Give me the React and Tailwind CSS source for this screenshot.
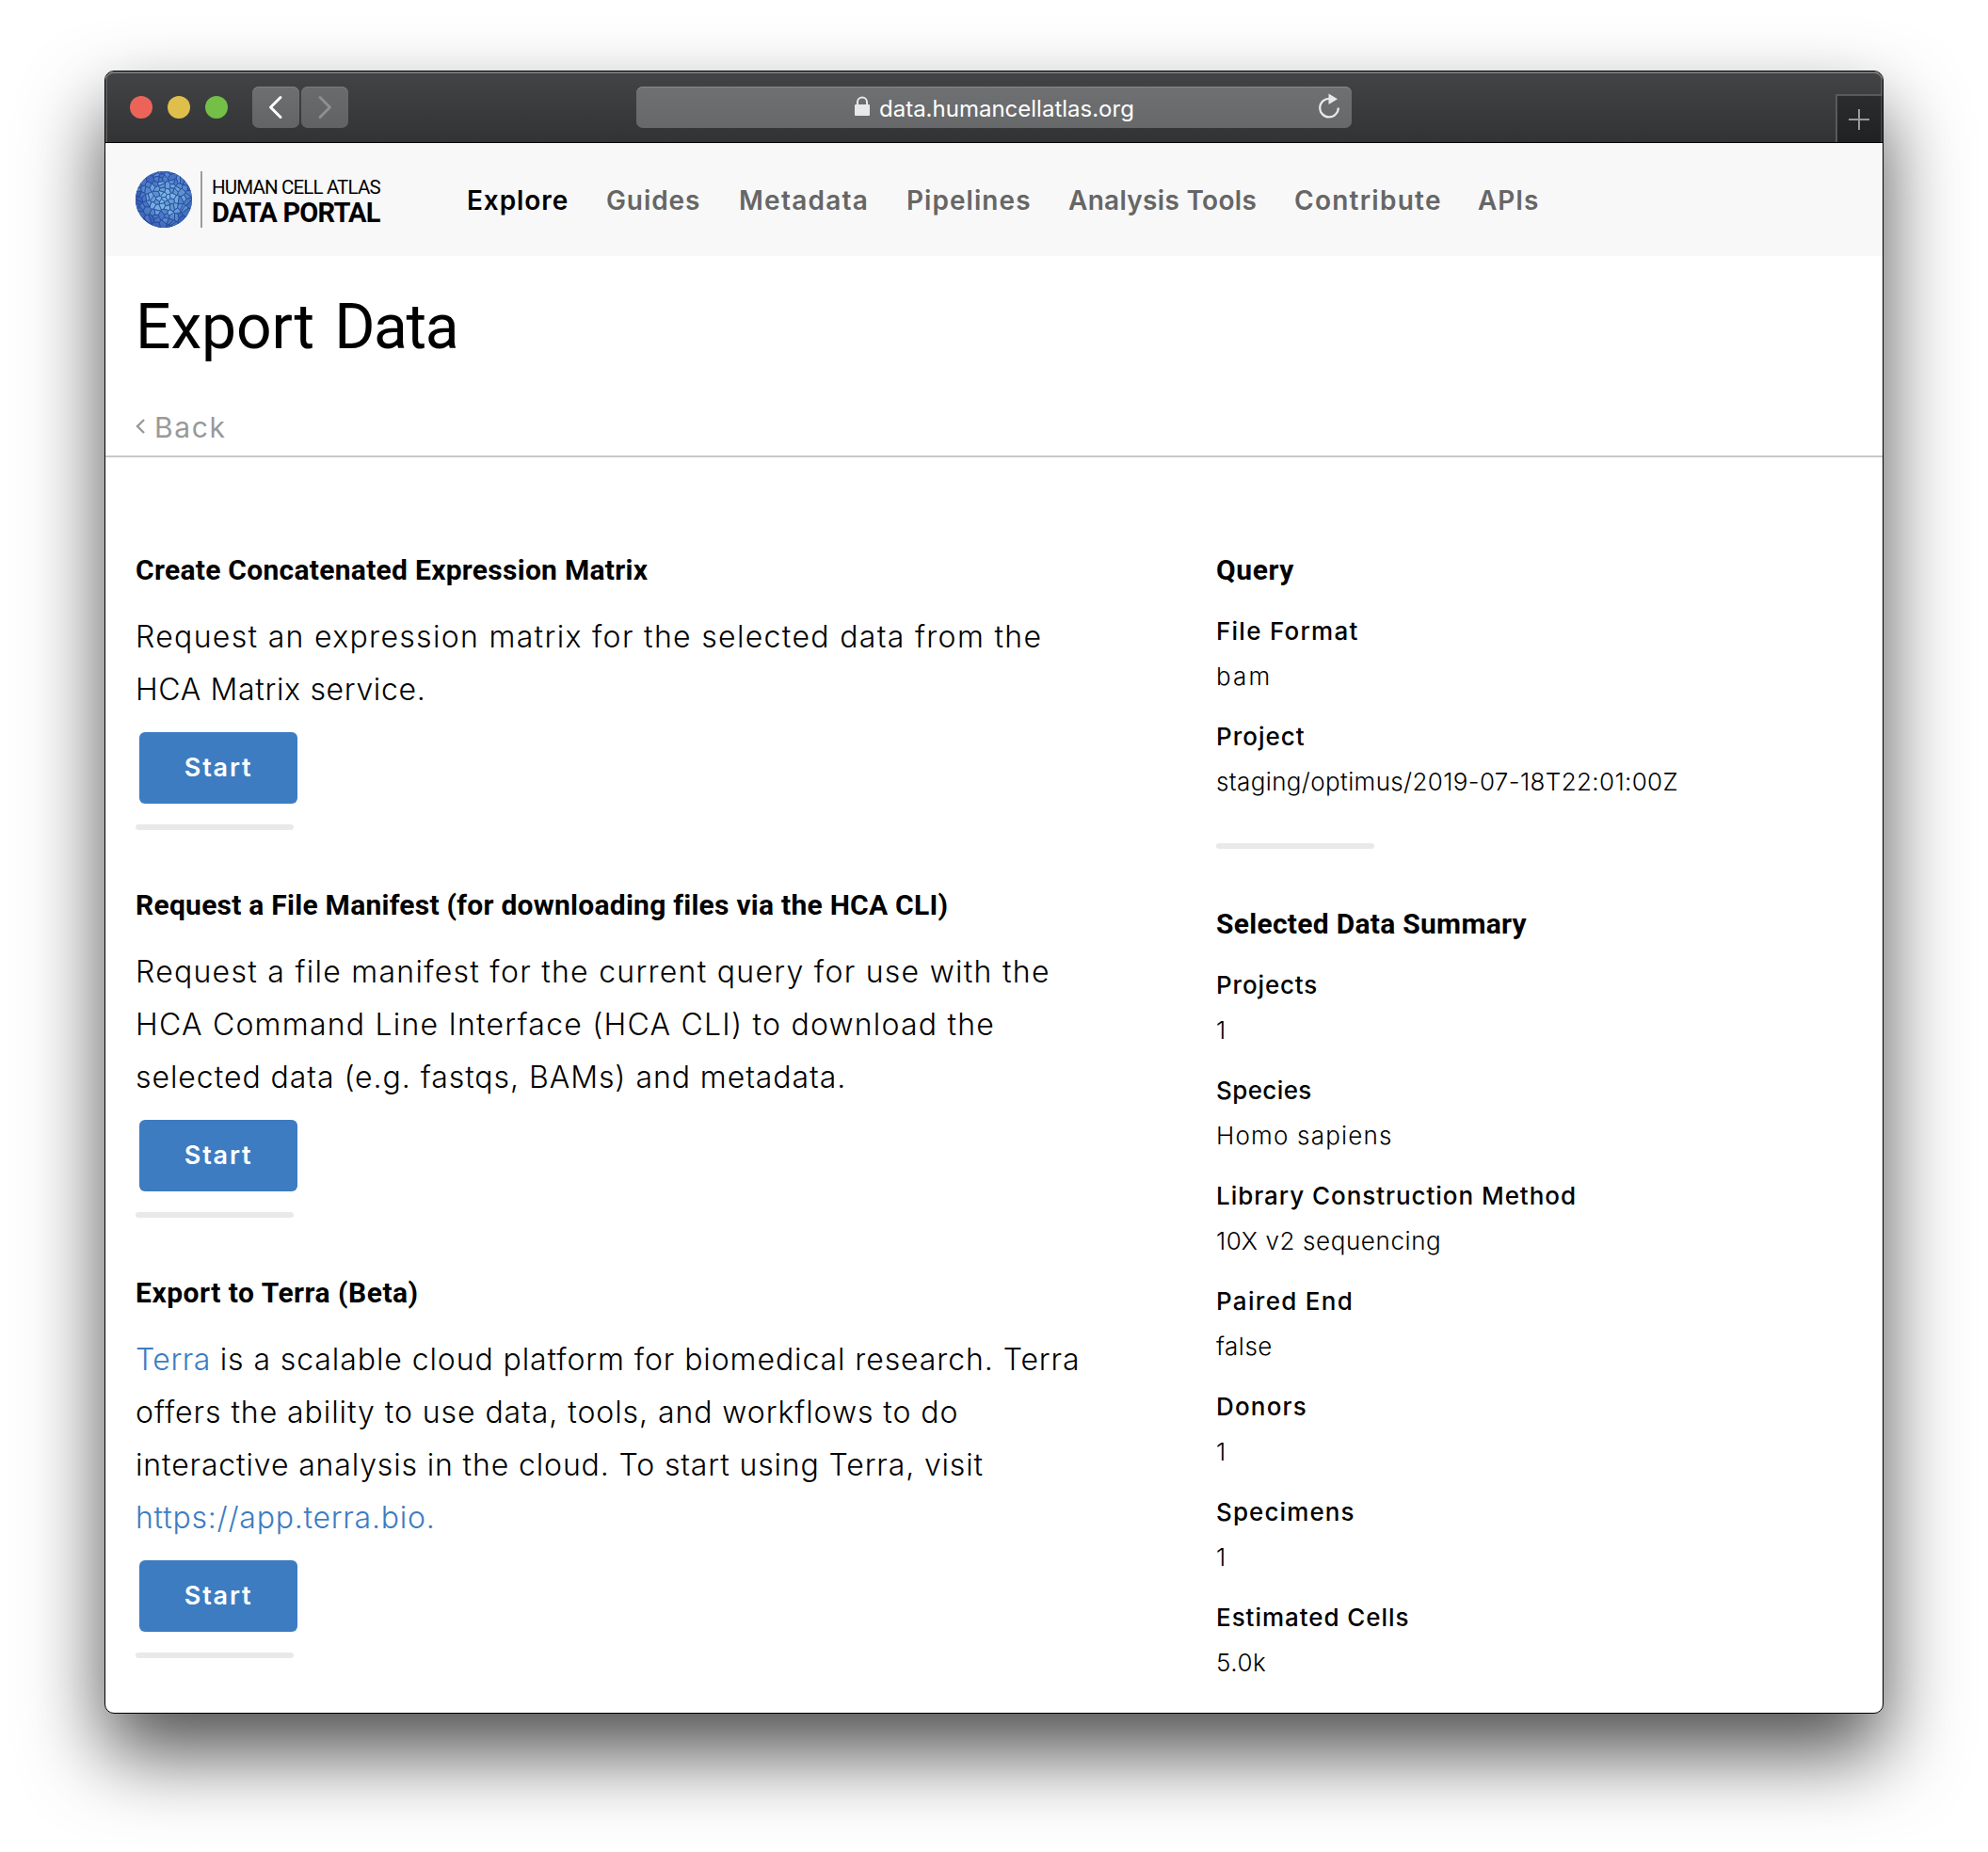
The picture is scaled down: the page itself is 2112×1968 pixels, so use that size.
import React from "react";

const NAV = [
  { label: "Explore", cls: "w-[148px] tracking-[0.9px] text-black" },
  { label: "Guides", cls: "w-[141px] tracking-[0.9px] text-[#666]" },
  { label: "Metadata", cls: "w-[178px] tracking-[1.25px] text-[#666]" },
  { label: "Pipelines", cls: "w-[172px] tracking-[1.05px] text-[#666]" },
  { label: "Analysis Tools", cls: "w-[240px] tracking-[0.3px] text-[#666]" },
  { label: "Contribute", cls: "w-[195px] tracking-[1.25px] text-[#666]" },
  { label: "APIs", cls: "tracking-[0.9px] text-[#666]" },
];

const QUERY = [
  { label: "File Format", value: "bam", lc: "tracking-[1.25px]", vc: "tracking-[2.2px]" },
  { label: "Project", value: "staging/optimus/2019-07-18T22:01:00Z", lc: "tracking-[1px]", vc: "tracking-[0.36px]" },
];

const SUMMARY = [
  { label: "Projects", value: "1", lc: "tracking-[0.85px]", vc: "" },
  { label: "Species", value: "Homo sapiens", lc: "tracking-[0.4px]", vc: "tracking-[1.2px]" },
  { label: "Library Construction Method", value: "10X v2 sequencing", lc: "tracking-[0.95px]", vc: "tracking-[0.6px]" },
  { label: "Paired End", value: "false", lc: "tracking-[1.3px]", vc: "tracking-[0.5px]" },
  { label: "Donors", value: "1", lc: "tracking-[1.2px]", vc: "" },
  { label: "Specimens", value: "1", lc: "tracking-[1.1px]", vc: "" },
  { label: "Estimated Cells", value: "5.0k", lc: "tracking-[0.95px]", vc: "tracking-[0.5px]" },
];

// Cells of the globe mark: a Voronoi tiling of points spread over a hemisphere.
function buildCells() {
  let seed = 11;
  const rnd = () => {
    seed = (seed * 16807) % 2147483647;
    return seed / 2147483647;
  };
  const pts = [];
  const n = 105;
  for (let i = 0; i < n; i++) {
    const r = 31 * Math.pow((i + 0.5) / n, 0.53) + (rnd() - 0.5) * 2.5;
    const t = i * 2.39996 + (rnd() - 0.5) * 0.45;
    pts.push([30 + r * Math.cos(t), 30 + r * Math.sin(t)]);
  }
  return pts.map(([px, py], i) => {
    let poly = [[-5, -5], [65, -5], [65, 65], [-5, 65]];
    pts.forEach(([qx, qy], j) => {
      if (i === j || poly.length === 0) return;
      const nx = qx - px;
      const ny = qy - py;
      const c = (qx * qx + qy * qy - px * px - py * py) / 2;
      const side = (p) => p[0] * nx + p[1] * ny - c;
      const out = [];
      poly.forEach((p, k) => {
        const q = poly[(k + 1) % poly.length];
        const a = side(p);
        const b = side(q);
        if (a <= 0) out.push(p);
        if (a * b < 0) {
          const s = a / (a - b);
          out.push([p[0] + s * (q[0] - p[0]), p[1] + s * (q[1] - p[1])]);
        }
      });
      poly = out;
    });
    const d = Math.hypot(px - 32, py - 29) / 30;
    const k = Math.max(0, Math.min(1, 1.05 - d * 0.85 + (rnd() - 0.5) * 0.6));
    const mix = (a, b) => Math.round(a + (b - a) * k);
    return {
      points: poly.map((p) => p.map((v) => v.toFixed(1)).join(",")).join(" "),
      fill: `rgb(${mix(62, 122)},${mix(104, 182)},${mix(188, 224)})`,
    };
  });
}
const CELLS = buildCells();

function Globe() {
  return (
    <svg width="60" height="60" viewBox="0 0 60 60" className="shrink-0">
      <defs>
        <clipPath id="globe">
          <circle cx="30" cy="30" r="30" />
        </clipPath>
        <radialGradient id="shade" cx="0.5" cy="0.42" r="0.6">
          <stop offset="0.6" stopColor="#1f3f95" stopOpacity="0" />
          <stop offset="1" stopColor="#1f3f95" stopOpacity="0.45" />
        </radialGradient>
      </defs>
      <g clipPath="url(#globe)">
        <rect width="60" height="60" fill="#24499f" />
        {CELLS.map((c, i) => (
          <polygon key={i} points={c.points} fill={c.fill} stroke="#24479f" strokeWidth="0.8" />
        ))}
        <rect width="60" height="60" fill="url(#shade)" />
      </g>
    </svg>
  );
}

function Toolbar() {
  return (
    <div className="flex h-[76px] border-b border-black bg-linear-to-b from-[#434446] to-[#323335] shadow-[inset_0_2px_0_#737576,inset_2px_0_0_#58595b,inset_-2px_0_0_#58595b] rounded-t-[9px]">
      <div className="flex w-[564px] items-center pl-[26px]">
        <span className="size-6 rounded-full bg-[#ec6459]" />
        <span className="ml-4 size-6 rounded-full bg-[#dfbf4c]" />
        <span className="ml-4 size-6 rounded-full bg-[#74bf47]" />
        <span className="ml-[26px] flex h-11 w-[50px] items-center justify-center rounded-[7px] bg-linear-to-b from-[#6e6f71] to-[#636466] shadow-[inset_0_1px_0_#808183]">
          <svg width="50" height="44" viewBox="0 0 50 44" fill="none" stroke="#fff" strokeWidth="3" strokeLinecap="round" strokeLinejoin="round">
            <path d="M30 11.5 19.5 22 30 32.5" />
          </svg>
        </span>
        <span className="ml-0.5 flex h-11 w-[50px] items-center justify-center rounded-[7px] bg-linear-to-b from-[#6a6b6d] to-[#616264] shadow-[inset_0_1px_0_#7a7b7d]">
          <svg width="50" height="44" viewBox="0 0 50 44" fill="none" stroke="#8e8f90" strokeWidth="3" strokeLinecap="round" strokeLinejoin="round">
            <path d="M20 11.5 30.5 22 20 32.5" />
          </svg>
        </span>
      </div>
      <div className="mt-4 flex h-11 w-[760px] items-center rounded-[7px] bg-linear-to-b from-[#6f7072] to-[#676869] pl-[231px] pr-3 shadow-[inset_0_1px_0_#87888a]">
        <svg width="18" height="22" viewBox="0 0 18 22" className="mb-[2px]">
          <path d="M4 10V6.5a5 5 0 0 1 10 0V10" fill="none" stroke="#e8e8e8" strokeWidth="2" />
          <rect x="1" y="9" width="16" height="12" rx="1" fill="#e8e8e8" />
        </svg>
        <span className="ml-[9px] mt-[3px] text-[24px] leading-[41px] text-white">data.humancellatlas.org</span>
        <svg width="24" height="28" viewBox="0 0 24 28" className="mb-[2px] ml-auto" fill="none">
          <path d="M12.5 5.8A9.8 9.8 0 1 0 21.8 15.5" stroke="#e8e8e8" strokeWidth="2.2" />
          <path d="M11.5 0.5 21 6.2 11.5 12Z" fill="#e8e8e8" />
        </svg>
      </div>
      <div className="ml-auto mt-6 flex h-[51px] w-[50px] items-center justify-center border-l-2 border-t-2 border-[#58595b] bg-linear-to-b from-[#2b2c2d] to-[#202122] pr-0.5 shadow-[inset_-2px_0_0_#404142]">
        <svg width="22" height="22" viewBox="0 0 22 22" stroke="#98999a" strokeWidth="2">
          <path d="M11 0v22M0 11h22" />
        </svg>
      </div>
    </div>
  );
}

function Heading({ children, className }) {
  return (
    <h3 className={`font-[Roboto,sans-serif] text-[30px] font-bold leading-10 whitespace-nowrap ${className}`}>{children}</h3>
  );
}

function Bar({ className }) {
  return <div className={`h-1.5 w-[168px] rounded-full bg-[#e9e9e9] ${className}`} />;
}

function Action({ title, titleClass, children }) {
  return (
    <section className="mb-[60px]">
      <Heading className={titleClass}>{title}</Heading>
      <p className="mt-[23px] flex flex-col text-[32px] font-light leading-[56px] whitespace-nowrap">{children}</p>
      <button className="ml-1 mt-[17px] block h-[76px] w-[168px] rounded-md bg-[#3d7cc1] pt-px text-[27px] font-semibold tracking-[1.8px] text-white">
        Start
      </button>
      <Bar className="mt-[22px]" />
    </section>
  );
}

function Facts({ items }) {
  return (
    <dl className="mt-[21px] flex flex-col gap-4 text-[26px] leading-[48px] whitespace-nowrap">
      {items.map((f) => (
        <div key={f.label}>
          <dt className={`font-medium ${f.lc}`}>{f.label}</dt>
          <dd className={`font-light ${f.vc}`}>{f.value}</dd>
        </div>
      ))}
    </dl>
  );
}

export default function App() {
  return (
    <div className="h-[1968px] w-[2112px] overflow-hidden bg-white pl-[111px] pt-[75px] font-[Inter,sans-serif] text-black">
      <div className="h-[1746px] w-[1890px] overflow-hidden rounded-[10px] border border-black bg-white shadow-[0_42px_84px_rgba(0,0,0,0.69)]">
        <Toolbar />
        <header className="flex h-[120px] items-center bg-[#f8f8f8] pl-8">
          <Globe />
          <div className="ml-[9px] h-[60px] w-0.5 bg-[#9c9c9c]" />
          <div className="ml-[10px] w-[271px] font-[Roboto,sans-serif] whitespace-nowrap">
            <div className="mt-[3px] text-[20.5px] leading-6 tracking-[-0.85px]">HUMAN CELL ATLAS</div>
            <div className="text-[29px] font-bold leading-[30px] tracking-[-0.8px]">DATA PORTAL</div>
          </div>
          <nav className="mt-px flex text-[28px] font-semibold leading-10 whitespace-nowrap">
            {NAV.map((n) => (
              <a key={n.label} className={n.cls}>{n.label}</a>
            ))}
          </nav>
        </header>
        <div className="border-b-2 border-[#c9c9c9] pb-[13px] pl-8 pt-9">
          <h1 className="font-[Roboto,sans-serif] text-[66px] leading-[80px] tracking-[-0.1px] [word-spacing:5px]">
            Export <span className="tracking-[-1.4px]">Data</span>
          </h1>
          <div className="mt-[47px] flex h-9 items-center text-[30px] leading-9 tracking-[1.6px] text-[#999]">
            <svg width="10" height="16" viewBox="0 0 10 16" fill="none" stroke="#999" strokeWidth="2.4">
              <path d="M9 1 2 8l7 7" />
            </svg>
            <span className="ml-[10px] mt-px">Back</span>
          </div>
        </div>
        <main className="flex pl-8 pt-[100px]">
          <div className="w-[1148px]">
            <Action title="Create Concatenated Expression Matrix" titleClass="tracking-[0.28px]">
              <span className="tracking-[1.32px]">Request an expression matrix for the selected data from the</span>
              <span className="tracking-[0.65px]">HCA Matrix service.</span>
            </Action>
            <Action title="Request a File Manifest (for downloading files via the HCA CLI)" titleClass="tracking-[0.25px]">
              <span className="tracking-[1.27px]">Request a file manifest for the current query for use with the</span>
              <span className="tracking-[1.22px]">HCA Command Line Interface (HCA CLI) to download the</span>
              <span className="tracking-[0.94px]">selected data (e.g. fastqs, BAMs) and metadata.</span>
            </Action>
            <Action title="Export to Terra (Beta)" titleClass="tracking-[0.5px]">
              <span className="tracking-[0.91px]">
                <a className="tracking-[0.5px] text-[#3d7cc1]">Terra</a> is a scalable cloud platform for biomedical research. Terra
              </span>
              <span className="tracking-[0.93px]">offers the ability to use data, tools, and workflows to do</span>
              <span className="tracking-[0.86px]">interactive analysis in the cloud. To start using Terra, visit</span>
              <a className="tracking-[0.75px] text-[#3d7cc1]">https://app.terra.bio.</a>
            </Action>
          </div>
          <aside>
            <Heading className="tracking-[0.6px]">Query</Heading>
            <Facts items={QUERY} />
            <Bar className="mb-[60px] mt-[41px]" />
            <Heading className="tracking-[0.28px]">Selected Data Summary</Heading>
            <Facts items={SUMMARY} />
          </aside>
        </main>
      </div>
    </div>
  );
}
